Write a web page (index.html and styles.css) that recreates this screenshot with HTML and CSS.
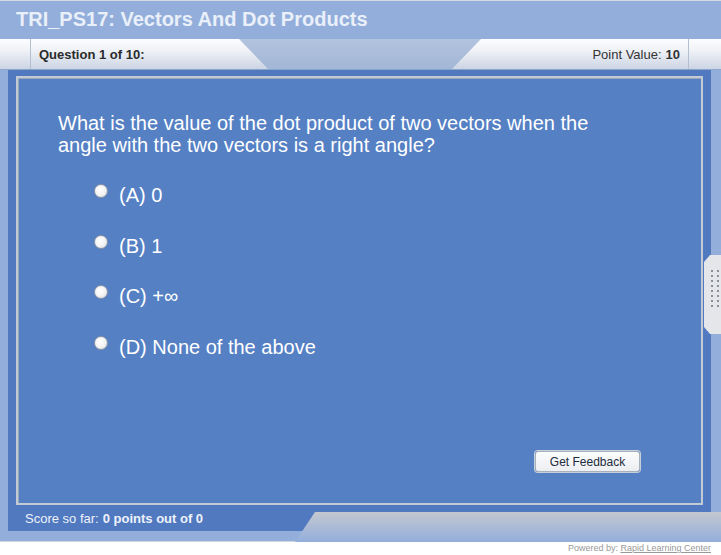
FILE: index.html
```html
<!DOCTYPE html>
<html>
<head>
<meta charset="utf-8">
<link rel="stylesheet" href="styles.css">
</head>
<body>
<div class="app">
  <div class="titlebar">TRI_PS17: Vectors And Dot Products</div>
  <div class="header">
    <div class="tab-left">
      <div class="tab-stub"></div>
      <div class="tab-label">Question 1 of 10:</div>
    </div>
    <div class="header-gap"></div>
    <div class="tab-right">
      <div class="tab-label right">Point Value: <b>10</b></div>
      <div class="tab-stub end"></div>
    </div>
  </div>
  <div class="body-row">
    <div class="main">
      <div class="panel">
        <p class="question">What is the value of the dot product of two vectors when the angle with the two vectors is a right angle?</p>
        <ul class="options">
          <li><span class="radio"></span><span>(A) 0</span></li>
          <li><span class="radio"></span><span>(B) 1</span></li>
          <li><span class="radio"></span><span>(C) +∞</span></li>
          <li><span class="radio"></span><span>(D) None of the above</span></li>
        </ul>
        <div class="actions"><button class="btn">Get Feedback</button></div>
      </div>
      <div class="score">Score so far: <b>0 points out of 0</b></div>
    </div>
    <div class="side"></div>
  </div>
  <div class="frame-bottom"></div>
  <div class="bottom-tab"></div>
  <div class="handle">
    <span></span><span></span><span></span><span></span><span></span><span></span><span></span><span></span>
    <span></span><span></span><span></span><span></span><span></span><span></span><span></span><span></span>
  </div>
</div>
<div class="powered">Powered by: <a href="#">Rapid Learning Center</a></div>
</body>
</html>
```
FILE: styles.css
```css
* { box-sizing: border-box; }
html, body { margin: 0; padding: 0; background: #fff; }
body { font-family: "Liberation Sans", Arial, sans-serif; width: 721px; }

.app {
  position: relative;
  width: 721px;
  height: 542px;
  background: #93aedb;
  border-top: 1px solid #d6dbe3;
  border-bottom: 1px solid #d0d6e0;
}

.titlebar {
  height: 38px;
  padding-left: 16px;
  display: flex;
  align-items: center;
  font-weight: bold;
  font-size: 20px;
  color: #eaf0f9;
  padding-bottom: 1px;
}

.header {
  height: 31px;
  display: flex;
  background: linear-gradient(#b2c3de, #a2b6d6);
  border-bottom: 1px solid #8ea6cc;
}
.tab-left, .tab-right {
  display: flex;
  background: linear-gradient(#fdfdfe 0%, #eef1f6 40%, #ccd5e4 100%);
  height: 30px;
}
.tab-left {
  width: 268px;
  clip-path: polygon(0 0, 239px 0, 268px 100%, 0 100%);
}
.tab-right {
  width: 269px;
  margin-left: auto;
  clip-path: polygon(29px 0, 100% 0, 100% 100%, 0 100%);
}
.header-gap { flex: 1; }
.tab-stub {
  width: 31px;
  border-right: 1px solid #b4bfd0;
}
.tab-stub.end {
  width: 33px;
  border-right: none;
  border-left: 1px solid #b4bfd0;
}
.tab-label {
  flex: 1;
  display: flex;
  align-items: center;
  padding-left: 8px;
  font-size: 13px;
  font-weight: bold;
  color: #2b2b2b;
}
.tab-label.right {
  justify-content: flex-end;
  padding-left: 0;
  padding-right: 8px;
  font-weight: normal;
  color: #333;
}
.tab-label.right b { margin-left: 4px; }

.body-row {
  display: flex;
  height: 461px;
}
.main {
  margin-left: 8px;
  width: 703px;
  background: #5079c0;
  padding: 6px 8px 0 8px;
  display: flex;
  flex-direction: column;
}
.side { flex: 1; }

.panel {
  height: 429px;
  background: #5580c4;
  border: 2px solid #c2cad6;
  box-shadow: inset 1px 1px 0 #9aa6b8;
  padding: 34px 40px 0 40px;
  display: flex;
  flex-direction: column;
}
.question {
  margin: 0;
  color: #fff;
  font-size: 20px;
  line-height: 22px;
  width: 540px;
}
.options {
  list-style: none;
  margin: 28px 0 0 0;
  padding: 0 0 0 36px;
  color: #fff;
  font-size: 20px;
}
.options li {
  height: 50.7px;
  display: flex;
  align-items: flex-start;
  gap: 11px;
}
.radio {
  flex: none;
  width: 14px;
  height: 14px;
  border-radius: 50%;
  background: radial-gradient(circle at 40% 40%, #ffffff 0%, #f4f4f4 50%, #d6d6d6 100%);
  border: 1px solid #8a96a8;
  margin-top: 0px;
}
.actions {
  margin-top: auto;
  margin-bottom: 31px;
  display: flex;
  justify-content: flex-end;
  padding-right: 21px;
}
.btn {
  width: 105px;
  height: 21px;
  font-family: "Liberation Sans", Arial, sans-serif;
  font-size: 12px;
  color: #1c2c3c;
  background: linear-gradient(#fbfcfd, #eceef2);
  border: 1px solid #a8b0bc;
  border-radius: 3px;
  box-shadow: 0 0 0 1px #c8d0dc;
  padding: 0;
}

.score {
  height: 26px;
  display: flex;
  align-items: center;
  padding-left: 9px;
  font-size: 13px;
  color: #eef2fa;
}
.score b { margin-left: 4px; }

.frame-bottom { height: 10px; }

.bottom-tab {
  position: absolute;
  left: 295px;
  right: 0;
  top: 511px;
  height: 30px;
  background: linear-gradient(#c4c8d0, #93aedb);
  clip-path: polygon(20px 0, 100% 0, 100% 100%, 0 100%);
}

.handle {
  position: absolute;
  right: 0;
  top: 254px;
  width: 17px;
  height: 79px;
  background: #e4e6ea;
  clip-path: polygon(6px 0, 100% 0, 100% 100%, 6px 100%, 0 72px, 0 7px);
  display: grid;
  grid-template-columns: 3px 3px;
  grid-auto-rows: 3px;
  column-gap: 3px;
  row-gap: 2px;
  padding: 15px 0 0 7px;
  align-content: start;
}
.handle span { width: 2px; height: 2px; background: #8a8e96; }

.powered {
  text-align: right;
  padding-right: 10px;
  font-size: 9px;
  color: #999;
  margin-top: 1px;
}
.powered a { color: #999; }
```
